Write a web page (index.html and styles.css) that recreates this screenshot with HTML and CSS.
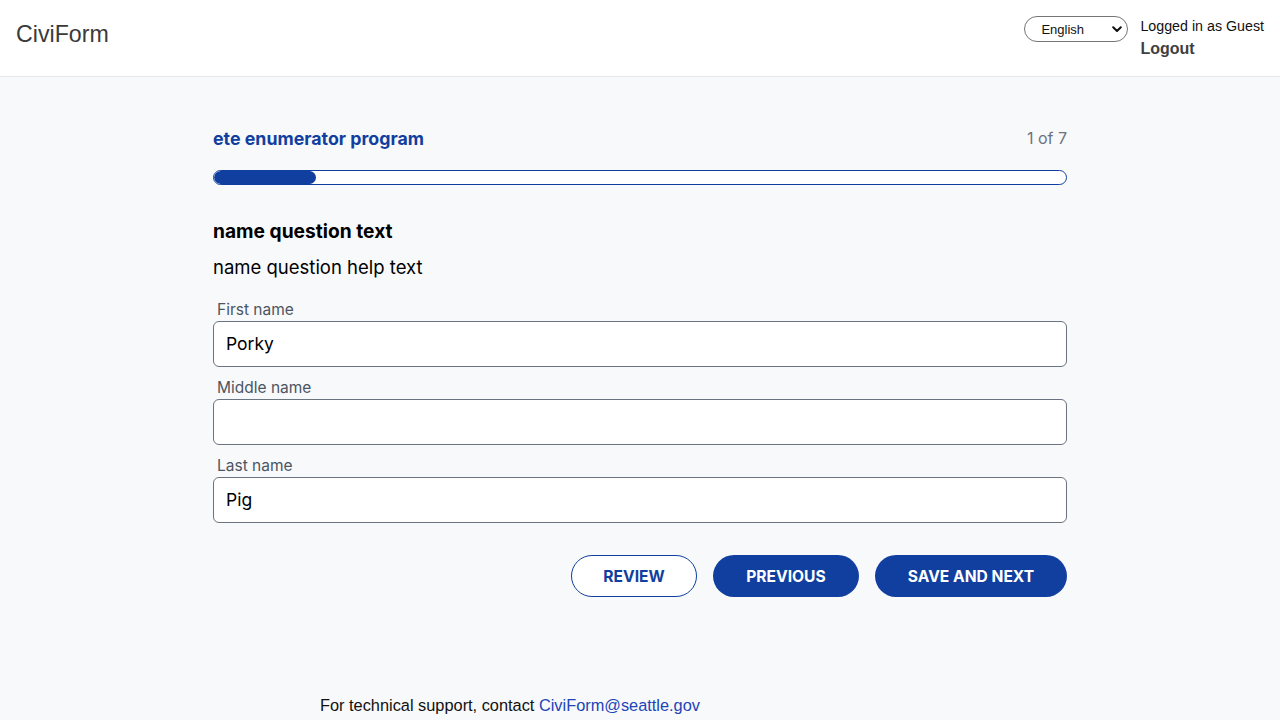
FILE: index.html
```html
<!DOCTYPE html>
<html>
<head>
<meta charset="utf-8">
<link rel="stylesheet" href="styles.css">
</head>
<body>
<header class="topbar">
  <div class="brand">CiviForm</div>
  <div class="user-area">
    <div class="lang">
      <span class="lang-text">English</span>
      <svg class="chev" width="10" height="7" viewBox="0 0 10 7"><path d="M1.2 1.2 L5 5 L8.8 1.2" fill="none" stroke="#111" stroke-width="2" stroke-linecap="round" stroke-linejoin="round"/></svg>
    </div>
    <div class="user-info">
      <div class="logged">Logged in as Guest</div>
      <div class="logout">Logout</div>
    </div>
  </div>
</header>
<main class="main">
  <div class="form-col">
    <div class="prog-head">
      <div class="prog-title">ete enumerator program</div>
      <div class="prog-count">1 of 7</div>
    </div>
    <div class="progress"><div class="progress-fill" style="width:12%"></div></div>
    <div class="q-title">name question text</div>
    <div class="q-help">name question help text</div>
    <div class="fields">
      <div class="field">
        <div class="label">First name</div>
        <div class="input">Porky</div>
      </div>
      <div class="field">
        <div class="label">Middle name</div>
        <div class="input"></div>
      </div>
      <div class="field">
        <div class="label">Last name</div>
        <div class="input">Pig</div>
      </div>
    </div>
    <div class="actions">
      <div class="btn btn-outline btn-review">REVIEW</div>
      <div class="btn btn-solid btn-prev">PREVIOUS</div>
      <div class="btn btn-solid btn-next">SAVE AND NEXT</div>
    </div>
  </div>
</main>
<footer class="footer">For technical support, contact <span class="mail">CiviForm@seattle.gov</span></footer>
</body>
</html>
```
FILE: styles.css
```css
* { box-sizing: border-box; }
html, body { margin: 0; padding: 0; }
body {
  background: #f8f9fa;
  font-family: Inter, "Liberation Sans", sans-serif;
  color: #000;
  width: 1280px;
  height: 720px;
  overflow: hidden;
}
.topbar {
  height: 77px;
  background: #fff;
  border-bottom: 1px solid #e5e7eb;
  display: flex;
  justify-content: space-between;
  align-items: flex-start;
  padding: 0 16px;
}
.brand {
  font-family: "Liberation Sans", Arial, sans-serif;
  font-size: 23.2px;
  color: #3a3a3a;
  margin-top: 21px;
}
.user-area {
  display: flex;
  align-items: flex-start;
  gap: 12px;
  margin-top: 16px;
}
.lang {
  width: 104px;
  height: 26px;
  border: 1px solid #767676;
  border-radius: 13px;
  background: #fff;
  display: flex;
  align-items: center;
  justify-content: space-between;
  padding: 0 5px 0 16px;
  font-family: "Liberation Sans", Arial, sans-serif;
  font-size: 13px;
  color: #111;
}
.chev { margin-top: 1px; }
.user-info {
  font-family: "Liberation Sans", Arial, sans-serif;
  font-size: 14.25px;
  color: #111;
}
.logged { line-height: 20px; }
.logout {
  font-weight: bold;
  font-size: 16px;
  color: #3f3f3f;
  margin-top: 4px;
}
.main {
  display: flex;
  justify-content: center;
  padding-top: 51px;
}
.form-col {
  width: 854px;
  display: flex;
  flex-direction: column;
}
.prog-head {
  display: flex;
  justify-content: space-between;
  align-items: baseline;
}
.prog-title {
  color: #113f9f;
  font-weight: 700;
  font-size: 17.8px;
  line-height: 22px;
}
.prog-count {
  color: #6b7280;
  font-size: 16px;
  position: relative;
  top: -1px;
}
.progress {
  margin-top: 20px;
  height: 15px;
  border: 1px solid #113f9f;
  border-radius: 8px;
  background: #fff;
  overflow: hidden;
}
.progress-fill {
  height: 100%;
  background: #113f9f;
  border-radius: 8px;
}
.q-title {
  margin-top: 34px;
  font-weight: 700;
  font-size: 19.2px;
  line-height: 24px;
}
.q-help {
  margin-top: 12px;
  font-size: 18.5px;
  line-height: 24px;
}
.fields {
  margin-top: 21px;
  display: flex;
  flex-direction: column;
  gap: 11px;
}
.field {
  display: flex;
  flex-direction: column;
}
.label {
  padding-left: 4px;
  color: #4b5563;
  font-size: 15.5px;
  line-height: 20px;
  margin-bottom: 1px;
}
.input {
  height: 46px;
  border: 1px solid #6b7280;
  border-radius: 6px;
  background: #fff;
  padding: 0 12px 1px;
  font-size: 17.5px;
  display: flex;
  align-items: center;
  color: #000;
}
.actions {
  margin-top: 32px;
  display: flex;
  justify-content: flex-end;
  gap: 16px;
}
.btn {
  height: 42px;
  border-radius: 21px;
  display: flex;
  align-items: center;
  justify-content: center;
  font-weight: 700;
  font-size: 15.6px;
}
.btn-outline {
  border: 1px solid #113f9f;
  color: #113f9f;
  background: #fff;
}
.btn-solid {
  background: #113f9f;
  color: #fff;
}
.btn-review { width: 126px; }
.btn-prev { width: 146px; }
.btn-next { width: 192px; }
.footer {
  margin-top: 99px;
  padding-left: 320px;
  font-family: "Liberation Sans", Arial, sans-serif;
  font-size: 16.35px;
  line-height: 18px;
  color: #111;
}
.mail { color: #2144b8; }
```
